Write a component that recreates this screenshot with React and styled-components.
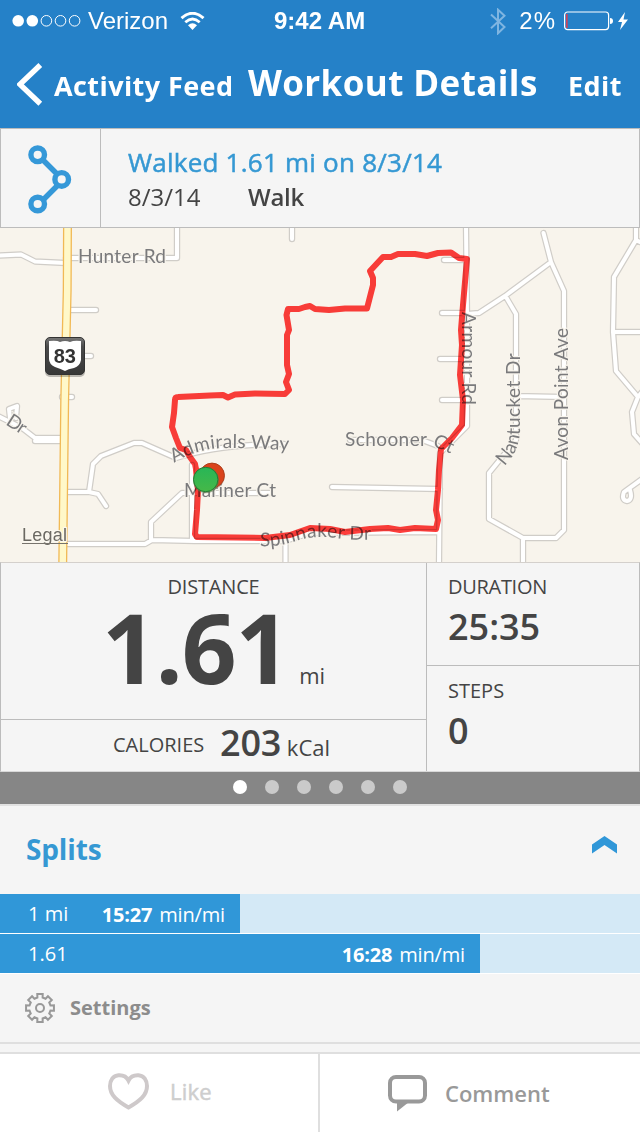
import React from "react";
import styled, { createGlobalStyle } from "styled-components";

const GlobalStyle = createGlobalStyle`
  * { box-sizing: border-box; }
  body { margin: 0; background: #fff; font-family: "Open Sans", "Noto Sans", sans-serif; color: #444; }
  svg { display: block; flex: none; }
`;

const Screen = styled.div`
  width: 640px;
  height: 1136px;
  display: flex;
  flex-direction: column;
  background: #fff;
  overflow: hidden;
`;

const Label = styled.span`
  font-size: ${(p) => p.$size}px;
  font-weight: ${(p) => p.$weight || 400};
  letter-spacing: ${(p) => p.$track || 0}px;
  line-height: 1;
  white-space: nowrap;
  color: ${(p) => p.$color || "inherit"};
  -webkit-text-stroke: ${(p) => p.$heavier || 0}px currentColor;
`;

const Header = styled.header`
  height: 128px;
  background: #2581c8;
  color: #fff;
`;

const StatusBar = styled.div`
  height: 40px;
  display: grid;
  grid-template-columns: 274px 1fr auto;
  align-items: center;
  padding: 2px 11px 0 0;
  font-family: "Liberation Sans", Arial, sans-serif;
`;

const StatusGroup = styled.div`
  display: flex;
  align-items: center;
  padding-left: ${(p) => p.$inset || 0}px;
`;

const Carrier = styled(Label)`
  margin: 0 12px 0 7px;
`;

const Percent = styled(Label)`
  margin: 0 8px 0 13px;
`;

const NavBar = styled.nav`
  height: 88px;
  display: flex;
  align-items: baseline;
  padding: 24px 0 0 17px;
`;

const BackButton = styled.a`
  display: flex;
  align-items: baseline;
  gap: 11px;
  width: 231px;
  svg { align-self: flex-start; margin-top: -9px; }
`;

const Title = styled.h1`
  margin: 0;
  width: 320px;
  font-size: 35px;
  line-height: 38px;
  font-weight: 700;
  letter-spacing: 0.4px;
  white-space: nowrap;
`;

const Summary = styled.section`
  height: 100px;
  display: flex;
  background: #f5f5f5;
  border: 1px solid #bcbcbc;
`;

const RouteCell = styled.div`
  width: 100px;
  border-right: 1px solid #bcbcbc;
  padding: 16px 0 0 27px;
`;

const SummaryText = styled.div`
  padding: 20px 0 0 27px;
  display: flex;
  flex-direction: column;
  gap: 10px;
`;

const SummaryMeta = styled.div`
  display: grid;
  grid-template-columns: 120px auto;
`;

const Stats = styled.section`
  height: 210px;
  display: grid;
  grid-template-columns: 426px 1fr;
  background: #f5f5f5;
  border: 1px solid #bcbcbc;
  border-top-color: #d4d0cc;
  border-bottom-color: #d8d8d8;
`;

const StatsColumn = styled.div`
  display: flex;
  flex-direction: column;
  border-right: ${(p) => (p.$divided ? "1px solid #bcbcbc" : "0")};
`;

const DistanceCell = styled.div`
  height: 157px;
  border-bottom: 1px solid #bcbcbc;
  display: flex;
  flex-direction: column;
  align-items: center;
  padding-top: 14px;
`;

const DistanceValue = styled.div`
  display: flex;
  align-items: baseline;
  gap: 10px;
  margin-top: 2px;
`;

const CaloriesCell = styled.div`
  flex: 1;
  display: flex;
  align-items: baseline;
  padding: 5px 0 0 112px;
`;

const CaloriesName = styled(Label)`
  position: relative;
  top: -4px;
  width: 107px;
`;

const SmallCell = styled.div`
  height: ${(p) => (p.$divided ? 103 : 105)}px;
  padding: ${(p) => (p.$divided ? 14 : 15)}px 0 0 21px;
  display: flex;
  flex-direction: column;
  gap: 12px;
  border-bottom: ${(p) => (p.$divided ? "1px solid #bcbcbc" : "0")};
`;

const Pager = styled.div`
  height: 32px;
  padding-bottom: 2px;
  background: #868686;
  display: flex;
  justify-content: center;
  align-items: center;
  gap: 18px;
`;

const Dot = styled.i`
  width: 14px;
  height: 14px;
  border-radius: 50%;
  background: ${(p) => (p.$active ? "#fff" : "#cacaca")};
`;

const Splits = styled.section`
  height: 240px;
  border-top: 2px solid #e1e1e1;
  border-bottom: 2px solid #dfdfdf;
  background: #f5f5f5;
`;

const SplitsHeader = styled.div`
  height: 88px;
  display: flex;
  align-items: center;
  justify-content: space-between;
  padding: 0 22px 2px 26px;
  svg { margin-top: -8px; }
`;

const Track = styled.div`
  height: 40px;
  background: #d4e9f6;
  border-bottom: 1px solid #fff;
`;

const Fill = styled.div`
  height: 39px;
  width: ${(p) => p.$width}px;
  padding: 0 15px 0 28px;
  background: #3097d8;
  color: #fff;
  display: flex;
  align-items: center;
  justify-content: space-between;
`;

const Pace = styled.span`
  display: flex;
  gap: 7px;
  padding-top: 2px;
`;

const Settings = styled.div`
  height: 68px;
  display: flex;
  align-items: center;
  gap: 15px;
  padding: 0 0 0 25px;
  color: #8c8c8c;
`;

const Spacer = styled.div`
  height: 8px;
  background: #f5f5f5;
`;

const Footer = styled.footer`
  height: 80px;
  border-top: 2px solid #dfdfdf;
  display: flex;
  background: #fff;
`;

const Action = styled.button`
  border: 0;
  border-right: ${(p) => (p.$divided ? "2px solid #dfdfdf" : "0")};
  background: none;
  font-family: inherit;
  width: 320px;
  padding: ${(p) => p.$pad};
  display: flex;
  align-items: center;
  gap: ${(p) => p.$gap}px;
  color: ${(p) => p.$color};
`;

const MapLabel = styled.text`
  font-family: Lato, "Open Sans", sans-serif;
  font-size: 19px;
  fill: #7a7a7c;
  stroke: #f8f4ec;
  stroke-width: 2.4px;
  stroke-linejoin: round;
  paint-order: stroke;
`;

const RoutePath = styled.path`
  mix-blend-mode: multiply;
`;

const SignText = styled.text`
  font: 700 20px "Liberation Sans", Arial, sans-serif;
  fill: #333;
`;

const LegalText = styled.text`
  font: 18px "Liberation Sans", Arial, sans-serif;
  fill: #6b6862;
  stroke: #fbf8f0;
  stroke-width: 2px;
  paint-order: stroke;
`;

const roads = [
  "M0 255.5L21 254.5L35 261.5L66 263",
  "M66 258H177V226",
  "M66 310H96", "M80 356H91", "M62 397H72",
  "M-2 416L22 428L35 438H64", "M35 441H64", "M10 418L9 409L17 406L16 418",
  "M64 492H89L93 464L101 456L134 443H142L176 458",
  "M89 492L98 494L106 506",
  "M64 544H145L152 540L195 541H285L310 533L438 532",
  "M151 540V522L182 493H270",
  "M192 465V541", "M285.5 541V564", "M292 226V239",
  "M176 458Q220 444 284 444",
  "M332 487L440 489",
  "M350 440L422 440L438 446",
  "M466 226L467 313V426L440 453L439 564",
  "M444 260H464", "M442 313H467", "M440 359H464", "M442 400H464",
  "M467 314L479 313L505 296L551 262",
  "M543.5 233L551 262L564 291V530L556 538H523L489 519V473L516 440V314L506 297",
  "M516 396L564 397", "M523 538V564",
  "M636 226V240L614 277L613 332L616 371L638 397L632 412L634 434L642 443",
  "M636 240L642 243", "M613 332H642", "M638 397L642 392",
  "M642 479L624 492Q621 500 627 501Q633 500 630 490",
];

const route =
  "M206 479L196 469L195 464L190 457L186 450L180 448L176 438L172 427L174 413L175 400Q175 397 178 397L210 395.5L223 395L228 397.5L235 394.5L255 393.5L285 394L289 390L286 382L289 374L287 365V335L289 330L286.5 315L288 309L299 309L305 307L310 306L315 309L329 310L345 308.5L367 308.5L373 285V278L370 271L383 257L391 257L398 254L415 254L427 256L438 253L451 252.5L459 258L467 259L463 305L461 330L462 345L460 375L463 400L462 425L452 438L441 449L439 470L438 490L436 510L438 520L436 529L415 528L400 530L388 528L370 529L345 532L330 529L310 528L290 535L265 538L197 537L195 534L197 510L198 490L196 470";

const roadsPath = roads.join(" ");

function RouteMap() {
  return (
    <svg width="640" height="334" viewBox="0 228 640 334" role="img" aria-label="Route map">
      <defs>
        <linearGradient id="sign" x1="0" y1="0" x2="0" y2="1">
          <stop offset="0" stopColor="#777" />
          <stop offset="0.25" stopColor="#4b4b4b" />
          <stop offset="1" stopColor="#373737" />
        </linearGradient>
        <linearGradient id="green" x1="0" y1="0" x2="0" y2="1">
          <stop offset="0" stopColor="#28b657" />
          <stop offset="1" stopColor="#46b848" />
        </linearGradient>
        <path id="admirals" d="M174 463Q198 448 225 448T300 451" />
        <path id="schooner" d="M345 446L428 446Q436 446 458 457" />
        <path id="spinnaker" d="M260 546Q278 547 296 541T336 538T390 539" />
        <path id="nantucket" d="M504 466Q521 450 520 426V330" />
      </defs>
      <rect y="228" width="640" height="334" fill="#f8f4ec" />
      <g fill="none" strokeLinejoin="round" strokeLinecap="round">
        <path d={roadsPath} stroke="#d0cdc8" strokeWidth="6.4" />
        <path d={roadsPath} stroke="#fff" strokeWidth="4" />
        <path d="M67.5 224L67.2 290L64.7 400L62.7 566" stroke="#f1b955" strokeWidth="9" />
        <path d="M67.5 224L67.2 290L64.7 400L62.7 566" stroke="#fff8c9" strokeWidth="6.4" />
      </g>
      <MapLabel x="78" y="262.5" textLength="88">Hunter Rd</MapLabel>
      <MapLabel transform="translate(5 424) rotate(33)" textLength="20">Dr</MapLabel>
      <MapLabel><textPath href="#admirals" textLength="118">Admirals Way</textPath></MapLabel>
      <MapLabel x="184" y="497" textLength="92">Mariner Ct</MapLabel>
      <MapLabel><textPath href="#schooner" textLength="107">Schooner Ct</textPath></MapLabel>
      <MapLabel><textPath href="#spinnaker" textLength="112">Spinnaker Dr</textPath></MapLabel>
      <MapLabel><textPath href="#nantucket" textLength="117">Nantucket Dr</textPath></MapLabel>
      <MapLabel transform="translate(568 460) rotate(-90)" textLength="132">Avon Point Ave</MapLabel>
      <MapLabel transform="translate(462 312) rotate(90)" textLength="93">Armour Rd</MapLabel>
      <RoutePath d={route} fill="none" stroke="#ff3e3c" strokeWidth="6" strokeLinejoin="round" strokeLinecap="round" />
      <rect x="45" y="339" width="40" height="38" rx="5" fill="#000" opacity="0.25" />
      <rect x="45.5" y="337.5" width="39" height="37" rx="4.5" fill="url(#sign)" stroke="#333" />
      <path d="M49 341Q57 340 60 342Q65 340 70 342Q74 340 81 341V360Q80 366 74 368Q68 369 65 371Q61 369 55 367Q49 364 49 359Z" fill="#fff" />
      <SignText x="53.7" y="363" textLength="22.3" lengthAdjust="spacingAndGlyphs">83</SignText>
      <circle cx="212" cy="476.5" r="12.7" fill="#aa8d80" opacity="0.6" />
      <circle cx="212" cy="475.5" r="12.4" fill="#da431b" stroke="#ae3f1c" />
      <circle cx="206" cy="480.3" r="13" fill="#5d7a4c" opacity="0.6" />
      <circle cx="205.7" cy="479.5" r="12.2" fill="url(#green)" stroke="#267c35" />
      <LegalText x="22" y="541" textLength="45">Legal</LegalText>
      <path d="M22 543.5H68" stroke="#77736c" />
    </svg>
  );
}

const gearPath = Array.from({ length: 8 }, (_, i) => {
  const at = (deg, r) => {
    const a = ((i * 45 + deg - 90) * Math.PI) / 180;
    return `${(16 + r * Math.cos(a)).toFixed(2)} ${(16 + r * Math.sin(a)).toFixed(2)}`;
  };
  return `${i ? "L" : "M"}${at(-14, 10.8)}L${at(-11, 14.2)}L${at(11, 14.2)}L${at(14, 10.8)}`;
}).join("") + "Z";

export default function App() {
  return (
    <>
      <GlobalStyle />
      <Screen>
        <Header>
          <StatusBar>
            <StatusGroup $inset={12}>
              <svg width="69" height="14" viewBox="0 0 69 14">
                <circle cx="6.2" cy="6.8" r="5.8" fill="#fff" />
                <circle cx="20.3" cy="6.8" r="5.8" fill="#fff" />
                <g fill="none" stroke="#fff">
                  <circle cx="34.4" cy="6.8" r="5.3" />
                  <circle cx="48.5" cy="6.8" r="5.3" />
                  <circle cx="62.6" cy="6.8" r="5.3" />
                </g>
              </svg>
              <Carrier $size={24}>Verizon</Carrier>
              <svg width="25" height="19" viewBox="0 0 25 19">
                <path d="M1.5 6.2Q12.5-3.6 23.5 6.2" fill="none" stroke="#fff" strokeWidth="3" />
                <path d="M5.3 10.2Q12.5 3.8 19.7 10.2" fill="none" stroke="#fff" strokeWidth="2.8" />
                <path d="M8 13.2Q12.5 9.3 17 13.2L12.5 18Z" fill="#fff" />
              </svg>
            </StatusGroup>
            <Label $size={24} $weight={700}>9:42 AM</Label>
            <StatusGroup>
              <svg width="16" height="27" viewBox="0 0 16 27">
                <path d="M1 6.5L14.5 19L8 25.3V1.7L14.5 7.8L1 20.3" fill="none" stroke="#7fb5e1" strokeWidth="2" />
              </svg>
              <Percent $size={24} $track={1}>2%</Percent>
              <svg width="65" height="20" viewBox="0 0 65 20">
                <rect x="0.6" y="1" width="44" height="17.6" rx="3" fill="none" stroke="#fff" strokeWidth="1.2" />
                <rect x="2" y="3" width="1.7" height="14" fill="#c8435e" />
                <path d="M46 7Q49 7 49 10T46 13Z" fill="#fff" />
                <path d="M61 1L54 11H58L56 19L64 8.5H59.5Z" fill="#fff" />
              </svg>
            </StatusGroup>
          </StatusBar>
          <NavBar>
            <BackButton>
              <svg width="26" height="43" viewBox="0 0 26 43">
                <path d="M23.3 2L3 21.4L23.3 40.8" fill="none" stroke="#fff" strokeWidth="5.4" />
              </svg>
              <Label $size={27} $weight={700} $track={0.42}>Activity Feed</Label>
            </BackButton>
            <Title>Workout Details</Title>
            <Label $size={27} $weight={700} $track={0.4}>Edit</Label>
          </NavBar>
        </Header>

        <Summary>
          <RouteCell>
            <svg width="44" height="70" viewBox="0 0 44 70" fill="none" stroke="#3598d8" strokeWidth="5.4">
              <path d="M14 14L30 30M30 40L14 56" />
              <circle cx="9.7" cy="9.8" r="6.8" fill="#f5f5f5" />
              <circle cx="33.7" cy="34.4" r="6.8" fill="#f5f5f5" />
              <circle cx="9.7" cy="59" r="6.8" fill="#f5f5f5" />
            </svg>
          </RouteCell>
          <SummaryText>
            <Label $size={26} $track={0.24} $heavier={0.5} $color="#3598d3">Walked 1.61 mi on 8/3/14</Label>
            <SummaryMeta>
              <Label $size={24}>8/3/14</Label>
              <Label $size={24} $weight={600} $track={-0.3}>Walk</Label>
            </SummaryMeta>
          </SummaryText>
        </Summary>

        <RouteMap />

        <Stats>
          <StatsColumn $divided>
            <DistanceCell>
              <Label $size={20} $track={-0.2}>DISTANCE</Label>
              <DistanceValue>
                <Label $size={96} $weight={700} $track={-1.2}>1.61</Label>
                <Label $size={22}>mi</Label>
              </DistanceValue>
            </DistanceCell>
            <CaloriesCell>
              <CaloriesName $size={20}>CALORIES</CaloriesName>
              <Label $size={36} $weight={600} $track={-0.2}>203</Label>
              <Label $size={22}>&nbsp;kCal</Label>
            </CaloriesCell>
          </StatsColumn>
          <StatsColumn>
            <SmallCell $divided>
              <Label $size={20} $track={-0.3}>DURATION</Label>
              <Label $size={36} $weight={600}>25:35</Label>
            </SmallCell>
            <SmallCell>
              <Label $size={20}>STEPS</Label>
              <Label $size={36} $weight={600}>0</Label>
            </SmallCell>
          </StatsColumn>
        </Stats>

        <Pager>
          {[0, 1, 2, 3, 4, 5].map((i) => <Dot key={i} $active={i === 0} />)}
        </Pager>

        <Splits>
          <SplitsHeader>
            <Label $size={28} $weight={700} $track={-0.15} $color="#3598d3">Splits</Label>
            <svg width="27" height="18" viewBox="0 0 27 18">
              <path d="M1 8.5L13.5 0L26 8.5V17.5L13.5 9L1 17.5Z" fill="#3097d8" />
            </svg>
          </SplitsHeader>
          <Track>
            <Fill $width={240}>
              <Label $size={20}>1 mi</Label>
              <Pace><Label $size={20} $weight={700} $track={-0.2}>15:27</Label><Label $size={20} $track={-0.15}>min/mi</Label></Pace>
            </Fill>
          </Track>
          <Track>
            <Fill $width={480}>
              <Label $size={20}>1.61</Label>
              <Pace><Label $size={20} $weight={700} $track={-0.2}>16:28</Label><Label $size={20} $track={-0.15}>min/mi</Label></Pace>
            </Fill>
          </Track>
          <Settings>
            <svg width="30" height="30" viewBox="1 1 30 30" fill="none" stroke="#999" strokeWidth="2">
              <path d={gearPath} />
              <circle cx="16" cy="16" r="4" />
            </svg>
            <Label $size={20} $weight={700}>Settings</Label>
          </Settings>
        </Splits>
        <Spacer />
        <Footer>
          <Action $divided $gap={21} $color="#cecece" $pad="0 0 4px 108px">
            <svg width="41" height="37" viewBox="0 0 41 37">
              <path d="M20.5 7.5C18 2.5 13.5 2 10.5 2.2C5 2.6 2 7.5 2 13C2 22 9 28 20.5 34.5C32 28 39 22 39 13C39 7.5 36 2.6 30.5 2.2C27 2 23 2.5 20.5 7.5Z" fill="none" stroke="#cec9ca" strokeWidth="4" />
            </svg>
            <Label $size={22} $heavier={0.5} $track={0.2}>Like</Label>
          </Action>
          <Action $gap={18} $color="#999" $pad="0 0 0 68px">
            <svg width="39" height="37" viewBox="0 0 39 37">
              <rect x="2" y="2" width="35" height="24.5" rx="6" fill="none" stroke="#999" strokeWidth="4" />
              <path d="M9 27H21L9 36.5Z" fill="#999" />
            </svg>
            <Label $size={22} $weight={600}>Comment</Label>
          </Action>
        </Footer>
      </Screen>
    </>
  );
}
